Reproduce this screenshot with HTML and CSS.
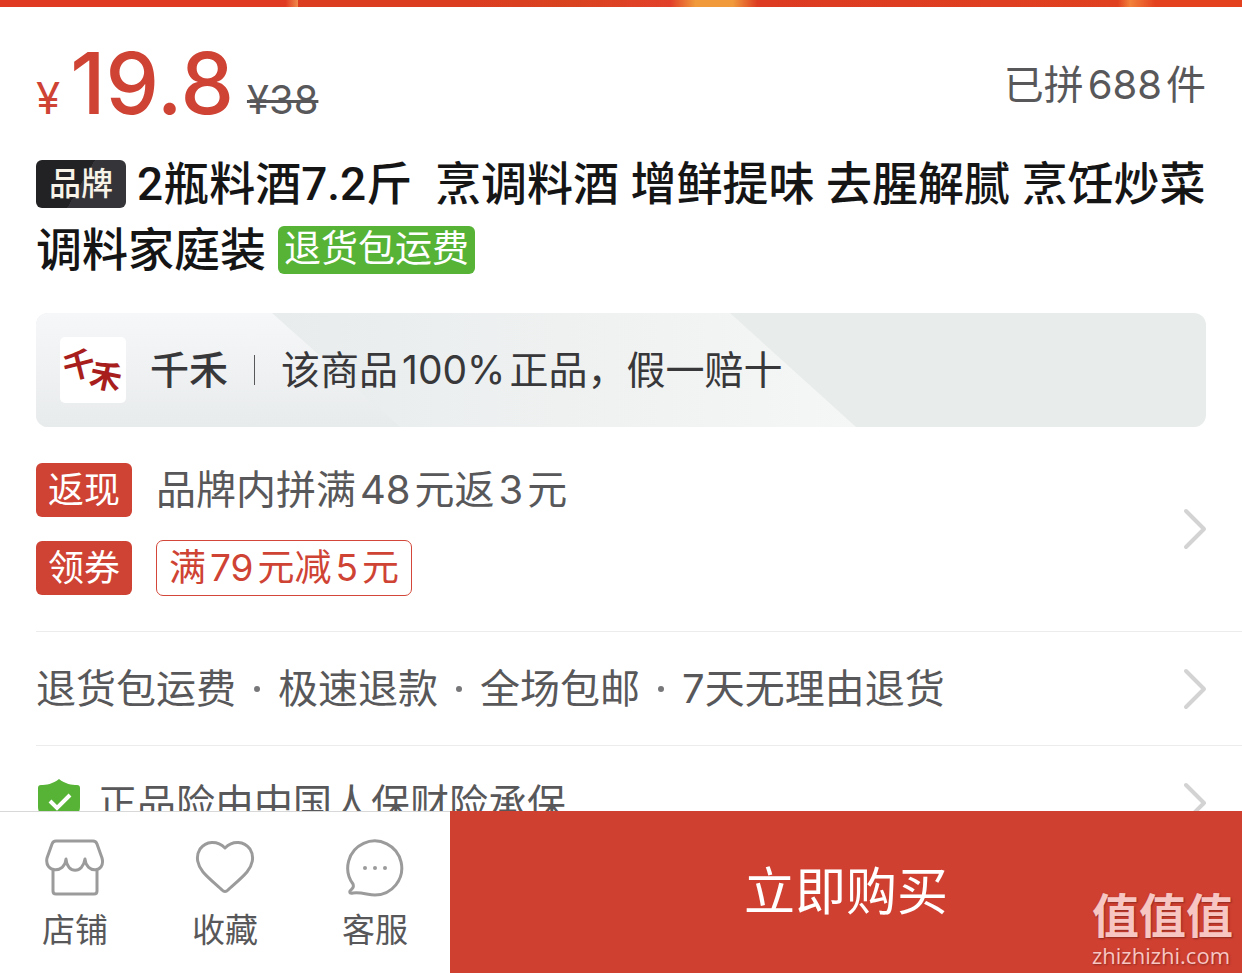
FILE: index.html
```html
<!DOCTYPE html>
<html lang="zh-CN">
<head>
<meta charset="utf-8">
<meta name="viewport" content="width=device-width, initial-scale=1">
<title>商品详情</title>
<link rel="stylesheet" href="styles.css">
</head>
<body>
<div class="page">
  <main class="content">
    <div class="hero-strip"></div>
    <section class="summary">
      <div class="price-row">
        <p class="price"><span class="price-sign">¥</span><span class="price-value">19.8</span><del class="price-old">¥38</del></p>
        <p class="sold">已拼<span class="num">688</span>件</p>
      </div>
      <h1 class="title"><span class="tag tag-brand">品牌</span>2瓶料酒7.2斤&nbsp; 烹调料酒 增鲜提味 去腥解腻 烹饪炒菜调料家庭装<span class="tag tag-free">退货包运费</span></h1>
      <div class="brand-banner">
        <svg class="banner-bg" viewBox="0 0 1170 114" preserveAspectRatio="none" aria-hidden="true">
          <defs>
            <linearGradient id="left" x1="0" y1="0" x2="0" y2="1"><stop offset="0" stop-color="#f6f7f8"/><stop offset="1" stop-color="#e8ebec"/></linearGradient>
            <linearGradient id="mid" x1="0" y1="0" x2="1" y2="0"><stop offset="0" stop-color="#e8eced"/><stop offset="0.5" stop-color="#eff1f1"/><stop offset="1" stop-color="#f5f6f6"/></linearGradient>
          </defs>
          <rect width="1170" height="114" fill="#e8eceb"/>
          <path d="M236 0H694L820 114H364Z" fill="url(#mid)"/>
          <path d="M0 0H236L364 114H0Z" fill="url(#left)"/>
        </svg>
        <svg class="brand-logo" viewBox="0 0 66 66" role="img" aria-label="千禾">
          <rect width="66" height="66" rx="5" fill="#fff"/>
          <g class="logo-text"><text x="3" y="40" transform="rotate(-14 18 28)">千</text><text x="30" y="51" transform="rotate(12 45 39)">禾</text></g>
        </svg>
        <strong class="brand-name">千禾</strong>
        <span class="brand-line"></span>
        <span class="brand-promise">该商品<span class="num">100%</span>正品，假一赔十</span>
      </div>
    </section>
    <a class="row promo" href="#promo">
      <span class="promo-list">
        <span class="promo-item"><span class="label">返现</span><span>品牌内拼满<span class="num">48</span>元返<span class="num">3</span>元</span></span>
        <span class="promo-item"><span class="label">领券</span><span class="coupon">满<span class="num">79</span>元减<span class="num">5</span>元</span></span>
      </span>
      <svg class="chevron" viewBox="0 0 24 42" aria-hidden="true"><path d="M3 3 21 21 3 39"/></svg>
    </a>
    <a class="row" href="#service">
      <span class="services"><span>退货包运费</span><span>极速退款</span><span>全场包邮</span><span>7天无理由退货</span></span>
      <svg class="chevron" viewBox="0 0 24 42" aria-hidden="true"><path d="M3 3 21 21 3 39"/></svg>
    </a>
    <a class="row" href="#insurance">
      <span class="insurance">
        <svg class="shield" viewBox="0 0 42 48" aria-hidden="true"><path d="M21 0C27 5 34 6 39 6Q42 6 42 9V28C42 38 30 43 21 48 12 43 0 38 0 28V9Q0 6 3 6C8 6 15 5 21 0Z" fill="#56b336"/><path d="M12 22 19 29 32 16" fill="none" stroke="#fff" stroke-width="4"/></svg>
        <span>正品险由中国人保财险承保</span>
      </span>
      <svg class="chevron" viewBox="0 0 24 42" aria-hidden="true"><path d="M3 3 21 21 3 39"/></svg>
    </a>
  </main>
  <footer class="bar">
    <nav class="actions">
      <button class="action" type="button">
        <svg class="action-icon" viewBox="0 0 60 60" aria-hidden="true"><path d="M11 3H48Q51 3 52 6L57 20C61 35 41 36 40 21 38 36 22 36 21 21 20 36 -1 35 2 20L7 6Q8 3 11 3ZM8 31V53Q8 56 11 56H49Q52 56 52 53V31"/></svg>
        <span>店铺</span>
      </button>
      <button class="action" type="button">
        <svg class="action-icon" viewBox="0 0 60 60" aria-hidden="true"><path d="M30 10C38 2 49 3 55 11 60 19 57 28 52 34 46 41 37 48 33 52Q30 55 27 52C23 48 14 41 8 34 3 28 0 19 5 11 11 3 22 2 30 10Z"/></svg>
        <span>收藏</span>
      </button>
      <button class="action" type="button">
        <svg class="action-icon" viewBox="0 0 60 60" aria-hidden="true"><path d="M8 46A27 27 0 1 1 30 57C23 57 17 54 8 55Q4 56 5 53C8 50 9 49 8 46Z"/><g class="dots"><circle cx="20" cy="30" r="2"/><circle cx="30" cy="30" r="2"/><circle cx="40" cy="30" r="2"/></g></svg>
        <span>客服</span>
      </button>
    </nav>
    <button class="buy" type="button">立即购买</button>
    <div class="watermark"><span class="wm-name">值值值</span><span class="wm-site">zhizhizhi.com</span></div>
  </footer>
</div>
</body>
</html>
```
FILE: styles.css
```css
* { box-sizing: border-box; }
body {
  margin: 0;
  background: #fff;
  color: #58585a;
  font-family: Inter, "Noto Sans CJK SC", sans-serif;
  font-size: 40px;
  line-height: 54px;
}
p, h1 { margin: 0; }
a { color: inherit; text-decoration: none; }
button { border: 0; padding: 0; font: inherit; color: inherit; cursor: pointer; }
.num { padding: 0 4px; }

.page { display: flex; flex-direction: column; height: 100vh; }
.content { flex: 1; min-height: 0; overflow: hidden; }
.hero-strip {
  height: 7px;
  background: linear-gradient(90deg, #e13a22 0 23%, #f08b4c 24%, #db3d20 24% 38%, #d9431f 46%, #e2402a 54%, #f09a3c 56%, #f09a3c 59%, #dd3b22 61%, #e0401f 90%, #f2813a 91%, #e4421f 93%);
}
.summary { padding: 35px 36px 0; }
.price-row { display: flex; justify-content: space-between; height: 84px; }
.price { display: flex; align-items: baseline; line-height: 84px; }
.price-sign { color: #cf4334; font-size: 44px; }
.price-value { margin-left: 10px; color: #cf4334; font-size: 85px; font-weight: 500; }
.price-old { margin-left: 13px; font-size: 40px; text-decoration-thickness: 3px; }
.sold { padding-top: 16px; }

.title { margin-top: 25px; color: #151516; font-family: Roboto, "Noto Sans CJK SC", sans-serif; font-size: 46px; font-weight: 500; line-height: 66px; }
.tag { display: inline-block; height: 48px; border-radius: 6px; line-height: 48px; vertical-align: middle; margin-top: -8px; }
.tag-brand { margin-right: 11px; padding: 0 13px; background: linear-gradient(120deg, #222124 50%, #353439 50%); color: #f7f3e8; font-size: 32px; }
.tag-free { margin-left: 12px; padding: 0 6px; background: #56b336; color: #fff; font-size: 37px; font-weight: 400; }

.brand-banner {
  position: relative;
  display: flex;
  align-items: center;
  height: 114px;
  margin-top: 30px;
  padding: 0 24px;
  overflow: hidden;
  border-radius: 12px;
  color: #38383a;
  font-size: 39px;
}
.banner-bg { position: absolute; inset: 0; z-index: -1; width: 100%; height: 100%; }
.brand-logo { width: 66px; height: 66px; }
.logo-text { fill: #a81e1c; font-size: 32px; font-weight: 700; }
.brand-name { margin-left: 24px; font-weight: 500; }
.brand-line { width: 1px; height: 30px; margin: 0 26px; background: #58585a; }

.row {
  display: flex;
  align-items: center;
  justify-content: space-between;
  min-height: 114px;
  margin-left: 36px;
  padding-right: 35px;
  border-bottom: 1px solid #ececec;
}
.promo { padding-top: 36px; padding-bottom: 36px; }
.promo-list { display: grid; gap: 24px; }
.promo-item { display: flex; align-items: center; gap: 24px; height: 54px; }
.label { padding: 0 12px; border-radius: 6px; background: #cf4334; color: #fff; font-size: 36px; }
.coupon { padding: 0 12px; border: 1px solid #d2473a; border-radius: 7px; color: #cf4334; font-size: 37px; line-height: 54px; }
.chevron { width: 24px; height: 42px; fill: none; stroke: #d3d3d3; stroke-width: 4px; stroke-linecap: round; stroke-linejoin: round; }
.services, .services span { display: flex; align-items: center; }
.services span + span::before { content: ""; width: 6px; height: 6px; margin: 0 18px; border-radius: 50%; background: #77777a; }
.insurance { display: flex; align-items: center; gap: 18px; padding-left: 2px; font-size: 39px; }
.shield { width: 42px; height: 48px; }

.bar { position: relative; display: flex; height: 162px; }
.actions { display: flex; width: 450px; border-top: 1px solid #d8d8d8; }
.action { display: flex; flex: 1; flex-direction: column; align-items: center; padding-top: 26px; background: #fff; font-size: 33px; line-height: 48px; gap: 8px; }
.action-icon { width: 60px; height: 60px; fill: none; stroke: #9b9b9b; stroke-width: 3px; stroke-linejoin: round; }
.action-icon .dots { fill: #9b9b9b; stroke: none; }
.buy { flex: 1; background: #cf4031; color: #fff; font-size: 51px; }
.watermark { position: absolute; right: 9px; bottom: 4px; display: grid; color: #f8c6c2; text-shadow: 1px 1px 2px #8d2a20; }
.wm-name { font-size: 47px; font-weight: 700; line-height: 50px; }
.wm-site { font-family: "Open Sans", sans-serif; font-size: 22px; line-height: 28px; }
```
